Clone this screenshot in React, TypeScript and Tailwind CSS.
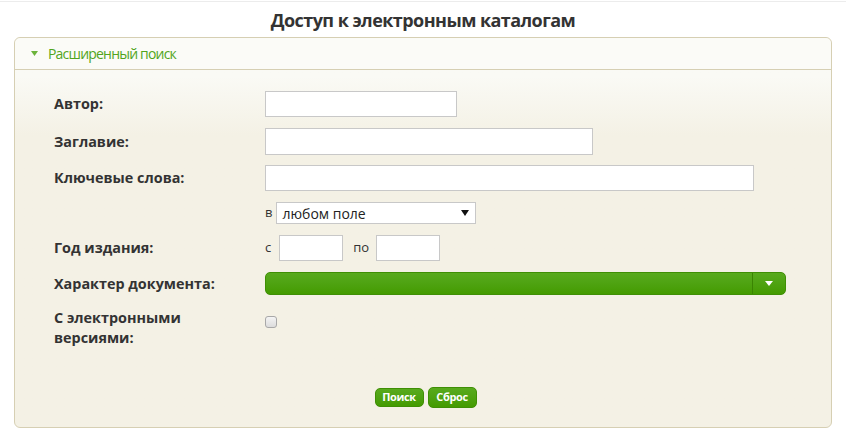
import React from "react";

const font = { fontFamily: '"Open Sans", "Noto Sans", sans-serif' };

function Label({ children }: { children: React.ReactNode }) {
  return (
    <div className="w-[211px] shrink-0 text-[14.4px] font-bold leading-[20px] text-[#333]">
      {children}
    </div>
  );
}

const inputCls =
  "h-[26px] border border-[#c8c8c8] bg-white px-1 text-[13px] outline-none";

export default function App() {
  return (
    <div className="min-h-[433px] bg-white" style={font}>
      <div className="h-[2px] border-b border-[#ececec]" />
      <h1 className="pt-[5px] text-center text-[18px] font-bold leading-[26px] tracking-[-0.55px] text-[#333]">
        Доступ к электронным каталогам
      </h1>
      <div className="mx-[14px] mt-[4px] rounded-[6px] border border-[#d6cfb3] bg-gradient-to-b from-[#fafaf5] from-[10%] to-[#f4f1e5] to-[25%]">
        <div className="flex h-[32px] items-center gap-[10px] rounded-t-[6px] border-b border-[#d6cfb3] bg-[#fbfbf7] pl-[16px]">
          <svg width="7" height="5" viewBox="0 0 7 5">
            <path d="M0 0h7L3.5 5z" fill="#6cb33a" />
          </svg>
          <span className="text-[14px] tracking-[-0.8px] text-[#52a51c]">
            Расширенный поиск
          </span>
        </div>
        <div className="flex flex-col pb-[19px] pl-[39px] pt-[21px]">
          <div className="flex h-[26px] items-center">
            <Label>Автор:</Label>
            <input className={`${inputCls} w-[192px]`} />
          </div>
          <div className="mt-[11px] flex h-[27px] items-center">
            <Label>Заглавие:</Label>
            <input className={`${inputCls} h-[27px] w-[328px]`} />
          </div>
          <div className="mt-[10px] flex h-[26px] items-center">
            <Label>Ключевые слова:</Label>
            <input className={`${inputCls} w-[489px]`} />
          </div>
          <div className="mt-[11px] flex h-[22px] items-center">
            <div className="w-[211px] shrink-0" />
            <span className="mr-[4px] text-[13px] text-[#333]">в</span>
            <div className="flex h-[22px] w-[200px] items-center justify-between border border-[#c8c8c8] bg-white pl-[5px] pr-[6px] text-[14px] text-[#222]">
              <span>любом поле</span>
              <svg width="8" height="6" viewBox="0 0 8 6">
                <path d="M0 0h8L4 6z" fill="#111" />
              </svg>
            </div>
          </div>
          <div className="mt-[11px] flex h-[26px] items-center">
            <Label>Год издания:</Label>
            <span className="mr-[8px] text-[13px] text-[#333]">с</span>
            <input className={`${inputCls} w-[64px]`} />
            <span className="ml-[10px] mr-[7px] text-[13px] text-[#333]">по</span>
            <input className={`${inputCls} w-[64px]`} />
          </div>
          <div className="mt-[11px] flex h-[23px] items-center">
            <Label>Характер документа:</Label>
            <div className="flex h-[23px] w-[521px] rounded-[5px] border border-[#3f8f05] bg-gradient-to-b from-[#58aa1d] to-[#449b00]">
              <div className="flex-1 border-r border-[#3a8402]" />
              <div className="flex w-[32px] items-center justify-center">
                <svg width="8" height="5" viewBox="0 0 8 5">
                  <path d="M0 0h8L4 5z" fill="#fff" />
                </svg>
              </div>
            </div>
          </div>
          <div className="mt-[13px] flex items-center">
            <Label>
              С электронными
              <br />
              версиями:
            </Label>
            <div className="-mt-[12px] h-[12px] w-[12px] rounded-[3px] border border-[#a8a8a8] bg-gradient-to-b from-[#f4f4f4] to-[#dcdcdc]" />
          </div>
          <div className="mt-[39px] flex items-center justify-center gap-[4px] pr-[34px]">
            <button className="flex h-[19px] w-[49px] items-center justify-center rounded-[5px] border border-[#3f8f05] bg-gradient-to-b from-[#58aa1d] to-[#449b00] text-[11px] font-bold tracking-[-0.4px] text-white">
              Поиск
            </button>
            <button className="flex h-[21px] w-[49px] items-center justify-center rounded-[5px] border border-[#3f8f05] bg-gradient-to-b from-[#58aa1d] to-[#449b00] text-[11px] font-bold tracking-[-0.4px] text-white">
              Сброс
            </button>
          </div>
        </div>
      </div>
    </div>
  );
}
